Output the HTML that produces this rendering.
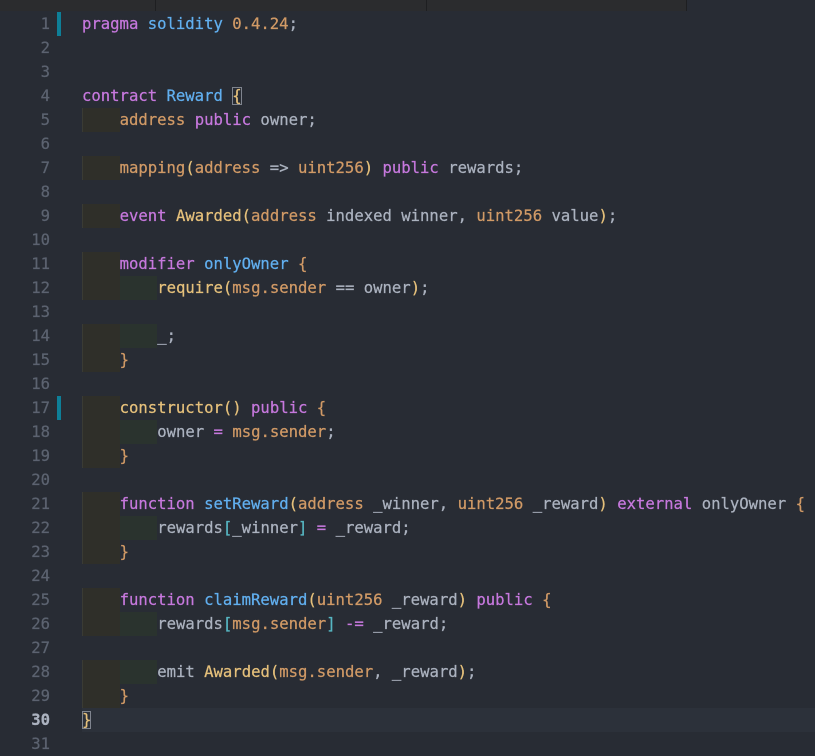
<!DOCTYPE html>
<html><head><meta charset="utf-8"><style>
html,body{margin:0;padding:0;background:#282c34;width:815px;height:754px;overflow:hidden}
.bar{position:absolute;left:0;top:0;width:687px;height:11px;background:#2b2c2e}
.dv{position:absolute;top:0;width:1px;height:11px;background:#1e1f21}
.ln{position:absolute;left:0;width:815px;height:24px;line-height:24px;font-family:"DejaVu Sans Mono","Liberation Mono",monospace;font-size:15.6px;color:#abb2bf;white-space:pre;-webkit-text-stroke:0.25px currentColor}
.n{position:absolute;right:765px;top:0;color:#5c6370;text-align:right}
.c{position:absolute;left:82px;top:0;height:24px}
.a,.b{display:inline-block;height:24px;vertical-align:top;width:37.6px}
.a{background:#2f2f29;box-shadow:inset 1px 0 0 #3a3b34}.b{background:#2a332e}
.k{color:#c678dd}.f{color:#61afef}.o{color:#d19a66}.y{color:#e5c07b}.q{color:#56b6c2}
.m{position:absolute;left:57px;width:4px;height:24px;background:#0e7f98}
.cur{background:#2c313a}
.br{outline:1px solid #7f848e;outline-offset:-1px}
</style></head><body>
<div class="bar"></div><div class="dv" style="left:155px"></div><div class="dv" style="left:426px"></div><div class="dv" style="left:686px"></div>
<div class="m" style="top:12px"></div><div class="m" style="top:396px"></div>

<div class="ln" style="top:12px"><span class="n">1</span><span class="c"><span class="k">pragma</span> <span class="f">solidity</span> <span class="o">0.4.24</span>;</span></div>
<div class="ln" style="top:36px"><span class="n">2</span></div>
<div class="ln" style="top:60px"><span class="n">3</span></div>
<div class="ln" style="top:84px"><span class="n">4</span><span class="c"><span class="k">contract</span> <span class="f">Reward</span> <span class="y br">{</span></span></div>
<div class="ln" style="top:108px"><span class="n">5</span><span class="c"><span class="a"></span><span class="o">address</span> <span class="k">public</span> owner;</span></div>
<div class="ln" style="top:132px"><span class="n">6</span></div>
<div class="ln" style="top:156px"><span class="n">7</span><span class="c"><span class="a"></span><span class="o">mapping</span><span class="y">(</span><span class="o">address</span> =&gt; <span class="o">uint256</span><span class="y">)</span> <span class="k">public</span> rewards;</span></div>
<div class="ln" style="top:180px"><span class="n">8</span></div>
<div class="ln" style="top:204px"><span class="n">9</span><span class="c"><span class="a"></span><span class="k">event</span> <span class="y">Awarded</span><span class="y">(</span><span class="o">address</span> indexed winner, <span class="o">uint256</span> value<span class="y">)</span>;</span></div>
<div class="ln" style="top:228px"><span class="n">10</span></div>
<div class="ln" style="top:252px"><span class="n">11</span><span class="c"><span class="a"></span><span class="k">modifier</span> <span class="f">onlyOwner</span> <span class="o">{</span></span></div>
<div class="ln" style="top:276px"><span class="n">12</span><span class="c"><span class="a"></span><span class="b"></span><span class="y">require</span><span class="y">(</span><span class="o">msg.sender</span> == owner<span class="y">)</span>;</span></div>
<div class="ln" style="top:300px"><span class="n">13</span></div>
<div class="ln" style="top:324px"><span class="n">14</span><span class="c"><span class="a"></span><span class="b"></span>_;</span></div>
<div class="ln" style="top:348px"><span class="n">15</span><span class="c"><span class="a"></span><span class="o">}</span></span></div>
<div class="ln" style="top:372px"><span class="n">16</span></div>
<div class="ln" style="top:396px"><span class="n">17</span><span class="c"><span class="a"></span><span class="y">constructor()</span> <span class="k">public</span> <span class="o">{</span></span></div>
<div class="ln" style="top:420px"><span class="n">18</span><span class="c"><span class="a"></span><span class="b"></span>owner <span class="k">=</span> <span class="o">msg.sender</span>;</span></div>
<div class="ln" style="top:444px"><span class="n">19</span><span class="c"><span class="a"></span><span class="o">}</span></span></div>
<div class="ln" style="top:468px"><span class="n">20</span></div>
<div class="ln" style="top:492px"><span class="n">21</span><span class="c"><span class="a"></span><span class="k">function</span> <span class="f">setReward</span><span class="y">(</span><span class="o">address</span> _winner, <span class="o">uint256</span> _reward<span class="y">)</span> <span class="k">external</span> onlyOwner <span class="o">{</span></span></div>
<div class="ln" style="top:516px"><span class="n">22</span><span class="c"><span class="a"></span><span class="b"></span>rewards<span class="q">[</span>_winner<span class="q">]</span> <span class="k">=</span> _reward;</span></div>
<div class="ln" style="top:540px"><span class="n">23</span><span class="c"><span class="a"></span><span class="o">}</span></span></div>
<div class="ln" style="top:564px"><span class="n">24</span></div>
<div class="ln" style="top:588px"><span class="n">25</span><span class="c"><span class="a"></span><span class="k">function</span> <span class="f">claimReward</span><span class="y">(</span><span class="o">uint256</span> _reward<span class="y">)</span> <span class="k">public</span> <span class="o">{</span></span></div>
<div class="ln" style="top:612px"><span class="n">26</span><span class="c"><span class="a"></span><span class="b"></span>rewards<span class="q">[</span><span class="o">msg.sender</span><span class="q">]</span> <span class="k">-=</span> _reward;</span></div>
<div class="ln" style="top:636px"><span class="n">27</span></div>
<div class="ln" style="top:660px"><span class="n">28</span><span class="c"><span class="a"></span><span class="b"></span>emit <span class="y">Awarded</span><span class="y">(</span><span class="o">msg.sender</span>, _reward<span class="y">)</span>;</span></div>
<div class="ln" style="top:684px"><span class="n">29</span><span class="c"><span class="a"></span><span class="o">}</span></span></div>
<div class="ln" style="top:708px"><div class="cur" style="position:absolute;left:82px;right:0;top:0;height:24px"></div><span class="n" style="color:#abb2bf;font-weight:bold">30</span><span class="c"><span class="y br">}</span></span></div>
<div class="ln" style="top:732px"><span class="n">31</span></div>
</body></html>
